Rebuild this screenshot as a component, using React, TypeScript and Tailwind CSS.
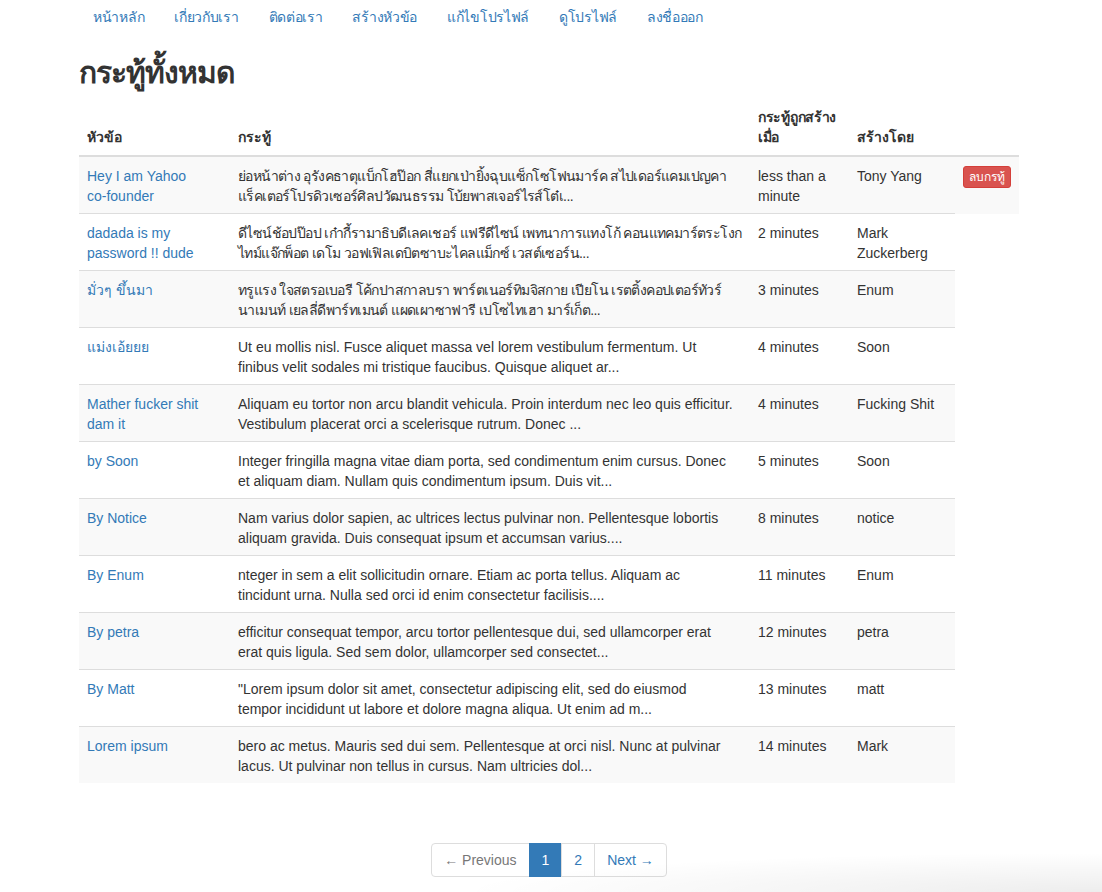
import React from "react";

type Post = {
  title: string[];
  body: string[];
  when: string[];
  by: string[];
  thai?: boolean;
  canDelete?: boolean;
};

const navLinks = [
  "หน้าหลัก",
  "เกี่ยวกับเรา",
  "ติดต่อเรา",
  "สร้างหัวข้อ",
  "แก้ไขโปรไฟล์",
  "ดูโปรไฟล์",
  "ลงชื่อออก",
];

const posts: Post[] = [
  {
    title: ["Hey I am Yahoo", "co-founder"],
    body: [
      "ย่อหน้าต่าง อุรังคธาตุแบ็กโฮป๊อก สี่แยกเป่ายิ้งฉุบแซ็กโซโฟนมาร์ค สไปเดอร์แคมเปญคา",
      "แร็คเตอร์โปรดิวเซอร์ศิลปวัฒนธรรม โบ้ยพาสเจอร์ไรส์โต๋เ...",
    ],
    when: ["less than a", "minute"],
    by: ["Tony Yang"],
    thai: true,
    canDelete: true,
  },
  {
    title: ["dadada is my", "password !! dude"],
    body: [
      "ดีไซน์ช้อปป๊อป เก๋ากี้รามาธิบดีเลคเชอร์ แฟรีดีไซน์ เพทนาการแทงโก้ คอนแทคมาร์ตระโงก",
      "ไทม์แจ๊กพ็อต เดโม วอฟเฟิลเดบิตซาบะไคลแม็กซ์ เวสต์เซอร์น...",
    ],
    when: ["2 minutes"],
    by: ["Mark", "Zuckerberg"],
    thai: true,
  },
  {
    title: ["มั่วๆ ขึ้นมา"],
    body: [
      "ทรูแรง ใจสตรอเบอรี โค้กปาสกาลบรา พาร์ตเนอร์ทิมจิสกาย เปียโน เรตติ้งคอปเตอร์ทัวร์",
      "นาเมนท์ เยลลี่ดีพาร์ทเมนต์ แผดเผาซาฟารี เปโซไทเฮา มาร์เก็ต...",
    ],
    when: ["3 minutes"],
    by: ["Enum"],
    thai: true,
  },
  {
    title: ["แม่งเอ้ยยย"],
    body: [
      "Ut eu mollis nisl. Fusce aliquet massa vel lorem vestibulum fermentum. Ut",
      "finibus velit sodales mi tristique faucibus. Quisque aliquet ar...",
    ],
    when: ["4 minutes"],
    by: ["Soon"],
  },
  {
    title: ["Mather fucker shit", "dam it"],
    body: [
      "Aliquam eu tortor non arcu blandit vehicula. Proin interdum nec leo quis efficitur.",
      "Vestibulum placerat orci a scelerisque rutrum. Donec ...",
    ],
    when: ["4 minutes"],
    by: ["Fucking Shit"],
  },
  {
    title: ["by Soon"],
    body: [
      "Integer fringilla magna vitae diam porta, sed condimentum enim cursus. Donec",
      "et aliquam diam. Nullam quis condimentum ipsum. Duis vit...",
    ],
    when: ["5 minutes"],
    by: ["Soon"],
  },
  {
    title: ["By Notice"],
    body: [
      "Nam varius dolor sapien, ac ultrices lectus pulvinar non. Pellentesque lobortis",
      "aliquam gravida. Duis consequat ipsum et accumsan varius....",
    ],
    when: ["8 minutes"],
    by: ["notice"],
  },
  {
    title: ["By Enum"],
    body: [
      "nteger in sem a elit sollicitudin ornare. Etiam ac porta tellus. Aliquam ac",
      "tincidunt urna. Nulla sed orci id enim consectetur facilisis....",
    ],
    when: ["11 minutes"],
    by: ["Enum"],
  },
  {
    title: ["By petra"],
    body: [
      "efficitur consequat tempor, arcu tortor pellentesque dui, sed ullamcorper erat",
      "erat quis ligula. Sed sem dolor, ullamcorper sed consectet...",
    ],
    when: ["12 minutes"],
    by: ["petra"],
  },
  {
    title: ["By Matt"],
    body: [
      "\"Lorem ipsum dolor sit amet, consectetur adipiscing elit, sed do eiusmod",
      "tempor incididunt ut labore et dolore magna aliqua. Ut enim ad m...",
    ],
    when: ["13 minutes"],
    by: ["matt"],
  },
  {
    title: ["Lorem ipsum"],
    body: [
      "bero ac metus. Mauris sed dui sem. Pellentesque at orci nisl. Nunc at pulvinar",
      "lacus. Ut pulvinar non tellus in cursus. Nam ultricies dol...",
    ],
    when: ["14 minutes"],
    by: ["Mark"],
  },
];

const Lines = ({ lines, tight }: { lines: string[]; tight?: boolean }) => (
  <>
    {lines.map((l, i) => (
      <span
        key={i}
        className={tight ? "block whitespace-nowrap tracking-[-0.6px]" : "block whitespace-nowrap"}
      >
        {l}
      </span>
    ))}
  </>
);

export default function App() {
  return (
    <div
      className="relative min-h-[892px] overflow-hidden bg-white text-[14px] leading-5 text-[#333]"
      style={{ fontFamily: '"Liberation Sans", "Noto Sans", sans-serif' }}
    >
      <div className="ml-[79px] w-[940px]">
        {/* Nav */}
        <ul className="flex">
          {navLinks.map((n, i) => (
            <li key={n} className={i === 0 ? "" : "ml-[2px]"}>
              <a href="#" className="block px-[14px] py-[7px] tracking-[-0.3px] text-[#337ab7]">
                {n}
              </a>
            </li>
          ))}
        </ul>

        <h2 className="mt-[22px] mb-[10px] text-[30px] font-bold leading-[33px] tracking-[-1px] text-[#333]">
          กระทู้ทั้งหมด
        </h2>

        {/* Posts table */}
        <table className="w-[940px] table-fixed">
          <thead>
            <tr>
              <th className="w-[151px] border-b-2 border-[#ddd] p-2 text-left align-bottom font-bold">
                หัวข้อ
              </th>
              <th className="w-[520px] border-b-2 border-[#ddd] p-2 text-left align-bottom font-bold">
                กระทู้
              </th>
              <th className="w-[99px] border-b-2 border-[#ddd] p-2 text-left align-bottom font-bold tracking-[-0.3px]">
                กระทู้ถูกสร้าง
                <br />
                เมื่อ
              </th>
              <th className="w-[106px] border-b-2 border-[#ddd] p-2 text-left align-bottom font-bold">
                สร้างโดย
              </th>
              <th className="w-[64px] border-b-2 border-[#ddd] p-2"></th>
            </tr>
          </thead>
          <tbody>
            {posts.map((p, i) => (
              <tr key={i} className={i % 2 === 0 ? "bg-[#f9f9f9]" : ""}>
                <td className="border-t border-[#ddd] px-2 pt-[9px] pb-[7px] align-top">
                  <a href="#" className="text-[#337ab7]">
                    <Lines lines={p.title} />
                  </a>
                </td>
                <td className="border-t border-[#ddd] px-2 pt-[9px] pb-[7px] align-top">
                  <Lines lines={p.body} tight={p.thai} />
                </td>
                <td className="border-t border-[#ddd] px-2 pt-[9px] pb-[7px] align-top">
                  <Lines lines={p.when} />
                </td>
                <td className="border-t border-[#ddd] px-2 pt-[9px] pb-[7px] align-top">
                  <Lines lines={p.by} />
                </td>
                {p.canDelete && (
                  <td className="border-t border-[#ddd] px-2 pt-[9px] pb-[7px] align-top">
                    <button className="rounded-[3px] border border-[#d43f3a] bg-[#d9534f] px-[5px] py-px text-[12px] leading-[18px] text-white">
                      ลบกรทู้
                    </button>
                  </td>
                )}
              </tr>
            ))}
          </tbody>
        </table>

        {/* Pagination */}
        <div className="mt-[60px] flex justify-center">
          <ul className="flex">
            <li>
              <span className="block rounded-l-[4px] border border-[#ddd] px-3 py-[6px] text-[#777]">
                ← Previous
              </span>
            </li>
            <li>
              <a href="#" className="-ml-px block border border-[#337ab7] bg-[#337ab7] px-3 py-[6px] text-white">
                1
              </a>
            </li>
            <li>
              <a href="#" className="-ml-px block border border-[#ddd] px-3 py-[6px] text-[#337ab7]">
                2
              </a>
            </li>
            <li>
              <a href="#" className="-ml-px block rounded-r-[4px] border border-[#ddd] px-3 py-[6px] text-[#337ab7]">
                Next →
              </a>
            </li>
          </ul>
        </div>
      </div>

      {/* window shadow at bottom right */}
      <div className="pointer-events-none absolute right-0 bottom-0 h-[40px] w-[650px] bg-[radial-gradient(ellipse_at_bottom_right,rgba(0,0,0,0.07),transparent_70%)]" />
    </div>
  );
}
